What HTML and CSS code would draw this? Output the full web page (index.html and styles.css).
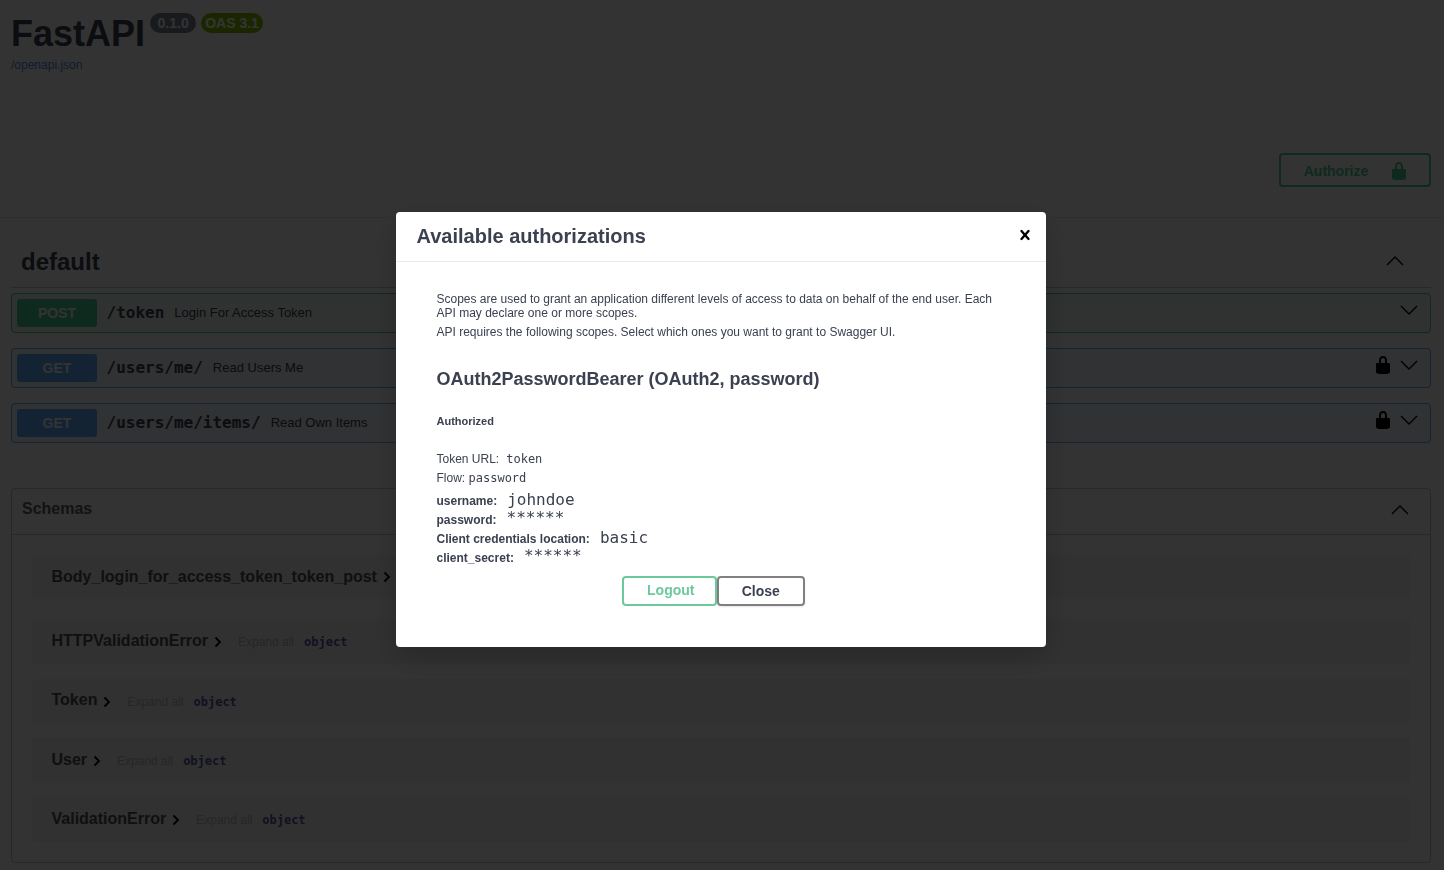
FILE: index.html
```html
<!DOCTYPE html>
<html lang="en">
<head>
    <meta charset="UTF-8">
    <title>FastAPI - Swagger UI</title>
    <link rel="stylesheet" href="styles.css">
</head>
<body>

<!-- Page header -->
<header class="top-section">
    <div class="info">
        <div class="title-row">
            <h1>FastAPI</h1>
            <span class="badge badge-version">0.1.0</span>
            <span class="badge badge-oas">OAS 3.1</span>
        </div>
        <a class="spec-link" href="#">/openapi.json</a>
    </div>
    <div class="auth-wrapper">
        <button class="btn-authorize">
            <span>Authorize</span>
            <svg class="lock" viewBox="0 0 20 20"><use href="#lock-icon"/></svg>
        </button>
    </div>
</header>

<!-- Operations -->
<section class="tag-section">
    <div class="tag-header">
        <h3>default</h3>
        <svg class="chevron" viewBox="0 0 18 10"><polyline points="1,9 9,1 17,9"/></svg>
    </div>

    <div class="opblock opblock-post">
        <span class="method">POST</span>
        <span class="path">/token</span>
        <span class="summary">Login For Access Token</span>
        <svg class="chevron" viewBox="0 0 18 10"><polyline points="1,1 9,9 17,1"/></svg>
    </div>
    <div class="opblock opblock-get">
        <span class="method">GET</span>
        <span class="path">/users/me/</span>
        <span class="summary">Read Users Me</span>
        <svg class="op-lock" viewBox="0 0 20 20"><use href="#lock-icon"/></svg>
        <svg class="chevron" viewBox="0 0 18 10"><polyline points="1,1 9,9 17,1"/></svg>
    </div>
    <div class="opblock opblock-get">
        <span class="method">GET</span>
        <span class="path">/users/me/items/</span>
        <span class="summary">Read Own Items</span>
        <svg class="op-lock" viewBox="0 0 20 20"><use href="#lock-icon"/></svg>
        <svg class="chevron" viewBox="0 0 18 10"><polyline points="1,1 9,9 17,1"/></svg>
    </div>
</section>

<!-- Schemas -->
<section class="schemas">
    <div class="schemas-header">
        <h4>Schemas</h4>
        <svg class="chevron" viewBox="0 0 18 10"><polyline points="1,9 9,1 17,9"/></svg>
    </div>
    <div class="schema-list">
        <div class="schema-row schema-first">
            <span class="schema-name">Body_login_for_access_token_token_post</span>
            <svg class="schema-arrow" viewBox="0 0 8 12"><polyline points="1.5,1.5 6,6 1.5,10.5"/></svg>
        </div>
        <div class="schema-row schema-second">
            <span class="schema-name">HTTPValidationError</span>
            <svg class="schema-arrow" viewBox="0 0 8 12"><polyline points="1.5,1.5 6,6 1.5,10.5"/></svg>
            <span class="expand">Expand all</span>
            <span class="type">object</span>
        </div>
        <div class="schema-row schema-token">
            <span class="schema-name">Token</span>
            <svg class="schema-arrow" viewBox="0 0 8 12"><polyline points="1.5,1.5 6,6 1.5,10.5"/></svg>
            <span class="expand">Expand all</span>
            <span class="type">object</span>
        </div>
        <div class="schema-row">
            <span class="schema-name">User</span>
            <svg class="schema-arrow" viewBox="0 0 8 12"><polyline points="1.5,1.5 6,6 1.5,10.5"/></svg>
            <span class="expand">Expand all</span>
            <span class="type">object</span>
        </div>
        <div class="schema-row">
            <span class="schema-name">ValidationError</span>
            <svg class="schema-arrow" viewBox="0 0 8 12"><polyline points="1.5,1.5 6,6 1.5,10.5"/></svg>
            <span class="expand">Expand all</span>
            <span class="type">object</span>
        </div>
    </div>
</section>

<!-- Dialog -->
<div class="backdrop"></div>
<div class="modal">
    <div class="modal-header">
        <h3>Available authorizations</h3>
        <svg class="modal-close" viewBox="0 0 20 20"><path d="M14.348 14.849a1.2 1.2 0 0 1-1.697 0L10 11.819l-2.651 3.029a1.2 1.2 0 1 1-1.697-1.697l2.758-3.15-2.759-3.152a1.2 1.2 0 1 1 1.697-1.697L10 8.183l2.651-3.031a1.2 1.2 0 1 1 1.697 1.697l-2.758 3.152 2.758 3.15a1.2 1.2 0 0 1 0 1.698z"/></svg>
    </div>
    <div class="modal-body">
        <p class="scope-note">Scopes are used to grant an application different levels of access to data on behalf of the end user. Each API may declare one or more scopes.</p>
        <p class="scope-note">API requires the following scopes. Select which ones you want to grant to Swagger UI.</p>
        <h4 class="scheme-title">OAuth2PasswordBearer (OAuth2, password)</h4>
        <h6 class="auth-state">Authorized</h6>
        <p class="meta meta-first">Token URL:<code class="code-sm code-gap">token</code></p>
        <p class="meta">Flow: <code class="code-sm">password</code></p>
        <div class="field field-first"><label>username:</label><code>johndoe</code></div>
        <div class="field"><label>password:</label><code class="stars">******</code></div>
        <div class="field"><label>Client credentials location:</label><code>basic</code></div>
        <div class="field"><label>client_secret:</label><code class="stars">******</code></div>
        <div class="modal-actions">
            <button class="btn-logout">Logout</button>
            <button class="btn-close">Close</button>
        </div>
    </div>
</div>

<svg class="icon-defs" aria-hidden="true">
    <symbol id="lock-icon" viewBox="0 0 20 20">
        <path d="M15.8 8H14V5.6C14 2.703 12.665 1 10 1 7.334 1 6 2.703 6 5.6V8H4c-.553 0-1 .646-1 1.199V17c0 .549.428 1.139.951 1.307l1.197.387C5.672 18.861 6.55 19 7.1 19h5.8c.549 0 1.428-.139 1.951-.307l1.196-.387c.524-.167.953-.757.953-1.306V9.199C17 8.646 16.352 8 15.8 8zM12 8H8V5.199C8 3.754 8.797 3 10 3c1.203 0 2 .754 2 2.199V8z"/>
    </symbol>
</svg>

</body>
</html>
```

FILE: styles.css
```css
/* Global */
html, body {
    margin: 0;
    padding: 0;
    height: 870px;
    overflow: hidden;
}

body {
    font-family: "Liberation Sans", Arial, sans-serif;
    color: #3b4151;
    background: #fff;
}

h1, h3, h4, h6, p {
    margin: 0;
}

button {
    font-family: inherit;
    cursor: pointer;
}

code {
    font-family: "DejaVu Sans Mono", monospace;
}

.icon-defs {
    display: none;
}

/* Header */
.top-section {
    height: 217px;
    padding: 0 13px 0 11px;
    border-bottom: 1px solid rgba(59, 65, 81, 0.1);
    display: flex;
    flex-direction: column;
    justify-content: space-between;
}

.info {
    padding-top: 13px;
}

.title-row {
    display: flex;
    align-items: flex-start;
}

h1 {
    font-size: 36px;
    line-height: 42px;
    font-weight: 700;
}

.badge {
    height: 20px;
    padding: 0 4px;
    border-radius: 10px;
    font-size: 14px;
    line-height: 20px;
    font-weight: 700;
    color: #fff;
}

.badge-version {
    margin-left: 5px;
    padding: 0 7.5px;
    background: #7d8492;
}

.badge-oas {
    margin-left: 5px;
    background: #89bf04;
}

.spec-link {
    display: block;
    margin-top: 3px;
    font-size: 12px;
    line-height: 14px;
    color: #4990e2;
    text-decoration: none;
}

.auth-wrapper {
    display: flex;
    justify-content: flex-end;
    padding-bottom: 30px;
}

.btn-authorize {
    width: 152px;
    height: 34px;
    display: flex;
    align-items: center;
    justify-content: center;
    gap: 21px;
    padding: 1px 0 0 3px;
    background: transparent;
    border: 2px solid #49cc90;
    border-radius: 4px;
    color: #49cc90;
    font-size: 14px;
    font-weight: 700;
}

.lock {
    width: 20px;
    height: 20px;
    fill: #49cc90;
}

/* Operations */
.tag-section {
    padding: 0 13px 0 11px;
}

.tag-header {
    height: 70px;
    padding: 0 27px 0 10px;
    border-bottom: 1px solid rgba(59, 65, 81, 0.3);
    display: flex;
    align-items: center;
    justify-content: space-between;
    box-sizing: border-box;
}

.tag-header h3 {
    font-size: 24px;
    line-height: 28px;
    margin-top: 18px;
}

.tag-header .chevron {
    margin-top: 16px;
}

.chevron {
    width: 18px;
    height: 10px;
    fill: none;
    stroke: #000;
    stroke-width: 1.4;
    flex: none;
}

.opblock {
    height: 40px;
    margin-top: 15px;
    padding: 0 12px 0 5px;
    display: flex;
    align-items: center;
    border-radius: 4px;
    box-sizing: border-box;
}

.tag-header + .opblock {
    margin-top: 5px;
}

.opblock-post {
    border: 1px solid #49cc90;
    background: rgba(73, 204, 144, 0.1);
}

.opblock-get {
    border: 1px solid #61affe;
    background: rgba(97, 175, 254, 0.1);
}

.method {
    width: 80px;
    height: 28px;
    border-radius: 3px;
    text-align: center;
    font-size: 14px;
    line-height: 28px;
    font-weight: 700;
    color: #fff;
}

.opblock-post .method {
    background: #49cc90;
}

.opblock-get .method {
    background: #61affe;
}

.path {
    margin-left: 9.5px;
    margin-bottom: 2px;
    font-family: "DejaVu Sans Mono", monospace;
    font-size: 16px;
    font-weight: 700;
}

.summary {
    margin-left: 10px;
    margin-bottom: 1px;
    flex: 1;
    font-size: 13px;
}

.op-lock {
    width: 20px;
    height: 20px;
    margin-right: 7px;
    margin-top: -7px;
}

.opblock .chevron {
    margin-top: -6px;
}

/* Schemas */
.schemas {
    height: 375px;
    margin: 45px 13px 0 11px;
    border: 1px solid rgba(59, 65, 81, 0.3);
    border-radius: 4px;
    box-sizing: border-box;
}

.schemas-header {
    height: 45px;
    padding: 0 21px 0 10px;
    border-bottom: 1px solid rgba(59, 65, 81, 0.3);
    display: flex;
    align-items: center;
    justify-content: space-between;
}

.schemas-header h4 {
    font-size: 16px;
    margin-bottom: 6px;
    color: #606060;
}

.schemas-header .chevron {
    margin-bottom: 4px;
}

.schema-list {
    padding: 20px 20px 0;
}

.schema-row {
    height: 45px;
    margin-bottom: 14px;
    padding: 0 19.5px;
    display: flex;
    align-items: center;
    background: rgba(0, 0, 0, 0.05);
    border-radius: 4px;
}

.schema-first {
    height: 44px;
    margin-bottom: 20px;
}

.schema-second {
    margin-bottom: 15px;
}

.schema-name {
    font-size: 16px;
    font-weight: 700;
    color: #505050;
    margin-top: -1px;
}

.schema-first .schema-name {
    margin-top: 0;
}

.schema-token .schema-name {
    margin-top: -3px;
}

.schema-arrow {
    width: 8px;
    height: 12px;
    margin-left: 6px;
    fill: none;
    stroke: #000;
    stroke-width: 1.8;
}

.expand {
    margin-left: 16px;
    font-size: 12px;
    color: #3b4151;
    opacity: 0.3;
}

.type {
    margin-left: 10px;
    font-family: "DejaVu Sans Mono", monospace;
    font-size: 12px;
    font-weight: 700;
    color: #55a;
}

/* Dialog */
.backdrop {
    position: fixed;
    inset: 0;
    background: rgba(0, 0, 0, 0.8);
}

.modal {
    position: fixed;
    left: 396px;
    top: 212px;
    width: 650px;
    height: 435px;
    background: #fff;
    border-radius: 4px;
    box-shadow: 0 10px 30px rgba(0, 0, 0, 0.2);
}

.modal-header {
    height: 49px;
    padding: 0 11px 0 20.5px;
    border-bottom: 1px solid #ebebeb;
    display: flex;
    align-items: center;
    justify-content: space-between;
}

.modal-header h3 {
    font-size: 20px;
}

.modal-close {
    width: 20px;
    height: 20px;
    margin-top: -3px;
}

.modal-body {
    padding: 30px 40px 0 40.5px;
}

.scope-note {
    font-size: 12px;
    line-height: 14px;
    margin-bottom: 5px;
}

.scheme-title {
    margin-top: 30px;
    font-size: 18px;
    line-height: 21px;
}

.auth-state {
    margin-top: 25px;
    font-size: 11px;
    line-height: 13px;
    font-weight: 700;
}

.meta {
    font-size: 12px;
    line-height: 19px;
}

.meta-first {
    margin-top: 22px;
}

.code-sm {
    font-size: 12px;
}

.code-gap {
    margin-left: 7px;
}

.field {
    height: 19px;
    display: flex;
    align-items: baseline;
    font-size: 12px;
}

.field-first {
    margin-top: 2px;
}

.field label {
    font-weight: 700;
    margin-right: 10px;
}

.field code {
    font-size: 16px;
}

.field .stars {
    transform: translateY(-1px);
}

.modal-actions {
    margin-top: 10px;
    padding-right: 16px;
    display: flex;
    justify-content: center;
}

.btn-logout, .btn-close {
    height: 30px;
    padding: 0;
    background: transparent;
    border-radius: 4px;
    font-size: 14px;
    font-weight: 700;
    box-sizing: border-box;
}

.btn-logout {
    width: 95px;
    padding: 0 0 3px 3px;
    border: 2px solid #6cc99b;
    color: #6cc99b;
}

.btn-close {
    width: 88px;
    border: 2px solid #808080;
    color: #3b4151;
    box-shadow: 0 1px 2px rgba(0, 0, 0, 0.1);
}
```
